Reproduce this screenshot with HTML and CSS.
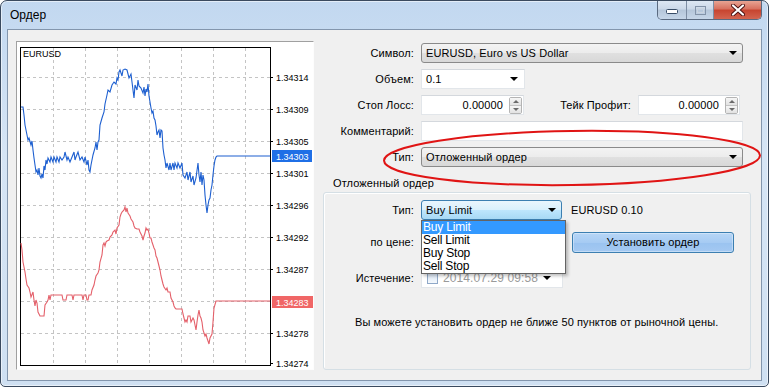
FILE: index.html
```html
<!DOCTYPE html>
<html lang="ru">
<head>
    <meta charset="UTF-8">
    <meta name="viewport" content="width=device-width, initial-scale=1.0">
    <title>Ордер</title>
    <link rel="stylesheet" href="styles.css">
</head>
<body>

<div class="window">
    <!-- Title bar -->
    <div class="titlebar">
        <span class="title">Ордер</span>
        <div class="caption-buttons">
            <span class="cap-btn cap-min">
                <svg width="12" height="6" viewBox="0 0 12 6"><rect x="0.5" y="0.5" width="11" height="4" rx="1" fill="#fff" stroke="#384c66"/></svg>
            </span>
            <span class="cap-btn cap-max">
                <svg width="11" height="9" viewBox="0 0 11 9"><rect x="0.5" y="0.5" width="10" height="8" fill="none" stroke="#8393a8"/><rect x="2.5" y="2.5" width="6" height="4" fill="none" stroke="#c9d3df"/></svg>
            </span>
            <span class="cap-btn cap-close">
                <svg width="14" height="12" viewBox="0 0 14 12"><path d="M2 1.5 L12 10.5 M12 1.5 L2 10.5" stroke="#4a1010" stroke-width="4" stroke-linecap="round"/><path d="M2 1.5 L12 10.5 M12 1.5 L2 10.5" stroke="#fff" stroke-width="2.2" stroke-linecap="round"/></svg>
            </span>
        </div>
    </div>

    <div class="client">
        <!-- Tick chart -->
        <div class="chart-panel">
            <svg class="chart" width="296" height="327" viewBox="17 42 296 327">
                <rect x="17" y="42" width="296" height="327" fill="#fff"/>
                <g stroke="#c4c4c4" stroke-dasharray="3 3" stroke-width="1">
                    <path d="M53.5 48V365M85.5 48V365M117.5 48V365M149.5 48V365M181.5 48V365M213.5 48V365M245.5 48V365"/>
                    <path d="M21 77.5H270M21 109.5H270M21 141.5H270M21 173.5H270M21 205.5H270M21 237.5H270M21 269.5H270M21 301.5H270M21 333.5H270"/>
                </g>
                <rect x="20.5" y="47.5" width="250" height="318" fill="none" stroke="#000"/>
                <g stroke="#000">
                    <path d="M270 77.5h3M270 109.5h3M270 141.5h3M270 173.5h3M270 205.5h3M270 237.5h3M270 269.5h3M270 333.5h3M270 363.5h3"/>
                </g>
                <polyline class="ask-line" points="21,107 23,107 24,115 25,125 27,135 28,140 29,138 31,145 32,141 33,150 34,158 35,165 36,172 37,170 38,175 39,168 40,176 41,178 42,174 43,178 44,166 45,170 46,160 47,164 48,158 50,162 51,157 53,162 54,157 56,162 57,157 59,162 60,157 62,160 64,157 65,152 67,160 68,157 70,162 72,157 74,152 75,160 76,157 78,152 80,160 82,157 84,162 85,157 87,165 88,160 89,170 90,172 91,165 93,155 95,148 96,142 97,150 98,142 99,140 100,125 102,118 104,112 105,104 107,95 108,90 110,92 112,85 114,82 116,84 117,78 118,80 119,72 120,70 122,76 123,70 125,69 127,70 129,78 131,74 132,82 133,90 134,98 135,85 137,90 138,80 139,86 141,88 143,93 144,87 145,96 146,89 147,92 148,84 149,96 150,102 151,108 152,113 153,111 154,118 155,120 156,126 157,135 158,132 159,130 160,138 161,130 162,131 163,148 164,155 165,160 166,168 167,163 169,170 170,163 171,170 173,163 174,170 175,163 177,168 178,163 180,168 182,163 183,175 185,178 187,172 188,180 190,172 191,182 193,176 194,185 196,178 198,163 199,175 200,182 201,172 202,185 203,175 204,180 205,195 206,205 207,213 208,205 209,200 210,198 211,190 212,185 213,175 214,166 215,160 216,157 217,156 270,156"/>
                <polyline class="bid-line" points="21,243 22,250 23,262 25,272 26,279 27,285 29,288 30,292 31,297 33,292 34,300 35,306 36,300 37,303 38,312 40,316 44,316 45,305 47,302 48,300 49,295 50,300 51,295 62,295 63,300 66,300 67,295 72,295 73,300 74,295 82,295 83,300 84,295 86,295 87,300 88,300 89,295 91,295 92,290 94,285 95,280 96,276 98,273 99,270 100,262 102,255 103,245 104,243 105,246 106,242 107,241 109,240 110,237 112,235 113,232 115,230 116,234 117,228 119,225 120,217 121,214 122,212 124,210 125,207 126,212 127,208 128,213 130,216 131,219 133,222 134,226 135,228 137,229 139,229 140,232 142,236 143,240 144,236 145,233 146,228 147,230 148,229 149,233 150,238 151,238 152,242 154,248 155,250 156,256 157,258 158,262 159,266 160,270 161,276 162,280 163,284 164,287 166,290 167,288 168,292 170,292 171,298 173,302 174,306 175,308 176,309 182,309 183,314 184,318 185,322 186,320 187,322 188,316 190,316 191,322 193,318 194,320 195,325 196,330 197,322 198,315 199,310 200,316 201,318 202,322 203,330 205,336 206,334 207,338 208,341 209,344 210,338 212,334 213,322 214,308 216,301 270,301"/>
                <g class="scale-text">
                    <text x="23" y="57">EURUSD</text>
                    <text x="276" y="81">1.34314</text>
                    <text x="276" y="113">1.34309</text>
                    <text x="276" y="145">1.34305</text>
                    <text x="276" y="177">1.34301</text>
                    <text x="276" y="209">1.34296</text>
                    <text x="276" y="241">1.34292</text>
                    <text x="276" y="273">1.34287</text>
                    <text x="276" y="337">1.34278</text>
                    <text x="276" y="367">1.34274</text>
                </g>
                <rect x="272" y="150" width="40" height="12" fill="#1f6fe6"/>
                <text class="tag-text" x="276" y="159.5">1.34303</text>
                <rect x="272" y="296" width="41" height="12" fill="#f06666"/>
                <text class="tag-text" x="276" y="305.5">1.34283</text>
            </svg>
        </div>

        <!-- Order form -->
        <div class="order-form">
            <div class="row">
                <span class="lbl">Символ:</span>
                <div class="combo combo-full"><span>EURUSD, Euro vs US Dollar</span><i class="arrow"></i></div>
            </div>
            <div class="row">
                <span class="lbl">Объем:</span>
                <div class="edit edit-volume"><span>0.1</span><i class="arrow"></i></div>
            </div>
            <div class="row">
                <span class="lbl">Стоп Лосс:</span>
                <div class="edit edit-spin">
                    <span class="num">0.00000</span>
                    <span class="spin"><b class="spin-up"></b><b class="spin-down"></b></span>
                </div>
                <span class="lbl lbl-tp">Тейк Профит:</span>
                <div class="edit edit-spin edit-tp">
                    <span class="num">0.00000</span>
                    <span class="spin"><b class="spin-up"></b><b class="spin-down"></b></span>
                </div>
            </div>
            <div class="row">
                <span class="lbl">Комментарий:</span>
                <div class="edit edit-full"></div>
            </div>
            <div class="row">
                <span class="lbl">Тип:</span>
                <div class="combo combo-full"><span>Отложенный ордер</span><i class="arrow"></i></div>
            </div>

            <!-- hand-drawn marker round the order type -->
            <svg class="marker" width="382" height="60" viewBox="0 0 382 60">
                <ellipse cx="190" cy="29" rx="188" ry="27" transform="rotate(-0.8 190 29)" fill="none" stroke="#e01414" stroke-width="2"/>
            </svg>

            <div class="group-caption">Отложенный ордер</div>
            <div class="group-box">
                <div class="row">
                    <span class="lbl">Тип:</span>
                    <div class="combo combo-hot"><span>Buy Limit</span><i class="arrow"></i></div>
                    <span class="symbol-info">EURUSD 0.10</span>

                    <ul class="dropdown">
                        <li class="selected">Buy Limit</li>
                        <li>Sell Limit</li>
                        <li>Buy Stop</li>
                        <li>Sell Stop</li>
                    </ul>
                </div>
                <div class="row row-price">
                    <span class="lbl">по цене:</span>
                    <div class="edit edit-price"></div>
                    <button class="btn-place">Установить ордер</button>
                </div>
                <div class="row row-expiry">
                    <span class="lbl">Истечение:</span>
                    <div class="edit edit-date">
                        <i class="check"></i>
                        <span class="date-text">2014.07.29 09:58</span>
                        <i class="arrow"></i>
                    </div>
                </div>
                <p class="note">Вы можете установить ордер не ближе 50 пунктов от рыночной цены.</p>
            </div>
        </div>
    </div>
</div>

</body>
</html>
```

FILE: styles.css
```css
body {
    margin: 0;
    font-family: 'Liberation Sans', Arial, sans-serif;
    font-size: 11px;
    letter-spacing: 0.1px;
    color: #000;
    background: #fff;
}
.window {
    width: 769px;
    height: 387px;
    box-sizing: border-box;
    border: 1px solid #3a4a5f;
    border-radius: 7px 7px 5px 5px;
    padding: 0 6px 5px;
    background: linear-gradient(to bottom, #c2d8f0 0%, #d6e5f5 40%, #cfe0f2 100%);
    box-shadow: inset 0 0 0 1px rgba(255, 255, 255, 0.55);
    display: flex;
    flex-direction: column;
}
.titlebar {
    height: 28px;
    display: flex;
    justify-content: space-between;
    align-items: flex-start;
}
.title {
    align-self: center;
    padding-left: 3px;
    font-size: 12px;
    letter-spacing: 0;
}
.caption-buttons {
    display: flex;
    height: 18px;
    border: 1px solid #5a6a80;
    border-top: none;
    border-radius: 0 0 5px 5px;
    overflow: hidden;
}
.cap-btn {
    display: flex;
    align-items: center;
    justify-content: center;
    background: linear-gradient(to bottom, #dde7f3 0%, #cbd8e8 45%, #b5c6da 50%, #c6d6e8 100%);
}
.cap-min {
    width: 28px;
    border-right: 1px solid #7d8da3;
}
.cap-min svg {
    margin-top: 4px;
}
.cap-max {
    width: 26px;
    border-right: 1px solid #7d8da3;
}
.cap-close {
    width: 47px;
    background: linear-gradient(to bottom, #e8a493 0%, #d7705e 45%, #c7442f 50%, #d36450 100%);
}
.client {
    flex: 1;
    display: flex;
    align-items: flex-start;
    gap: 9px;
    padding: 11px 0 0 8px;
    background: #f0f0f0;
    border: 1px solid #8396ad;
}

/* chart */
.chart-panel {
    width: 298px;
    height: 329px;
    box-sizing: border-box;
    border: 1px solid;
    border-color: #a0a0a0 #fdfdfd #fdfdfd #a0a0a0;
    flex: none;
}
.chart {
    display: block;
}
.ask-line {
    fill: none;
    stroke: #1d5fd0;
    stroke-width: 1.1;
}
.bid-line {
    fill: none;
    stroke: #e4606a;
    stroke-width: 1.1;
}
.scale-text text {
    font-family: 'Liberation Sans', Arial, sans-serif;
    font-size: 9px;
    letter-spacing: 0;
    fill: #000;
}
.tag-text {
    font-family: 'Liberation Sans', Arial, sans-serif;
    font-size: 9px;
    letter-spacing: 0;
    fill: #fff;
}

/* form */
.order-form {
    position: relative;
    width: 428px;
    padding-top: 2px;
}
.row {
    position: relative;
    display: flex;
    align-items: center;
    height: 20px;
    margin-bottom: 6px;
}
.lbl {
    width: 91px;
    margin-right: 7px;
    text-align: right;
    flex: none;
}
.combo {
    height: 20px;
    box-sizing: border-box;
    display: flex;
    align-items: center;
    padding-left: 4px;
    border: 1px solid #8a8a8a;
    border-radius: 3px;
    background: linear-gradient(to bottom, #f3f3f3 0%, #ececec 50%, #e0e0e0 51%, #d8d8d8 100%);
}
.combo-full {
    width: 322px;
}
.combo-hot {
    width: 141px;
    border-color: #3c7fb1;
    background: linear-gradient(to bottom, #eaf6fd 0%, #d9f0fc 50%, #bee6fd 51%, #a7d9f5 100%);
}
.arrow {
    margin-left: auto;
    margin-right: 5px;
    width: 0;
    height: 0;
    border-left: 4px solid transparent;
    border-right: 4px solid transparent;
    border-top: 4px solid #000;
}
.edit {
    height: 20px;
    box-sizing: border-box;
    display: flex;
    align-items: center;
    background: #fff;
    border: 1px solid #e2e6ea;
    border-top-color: #d4d8dd;
}
.edit-volume {
    width: 104px;
    padding-left: 4px;
}
.edit-volume .arrow {
    margin-right: 6px;
}
.edit-spin {
    width: 103px;
    padding-right: 1px;
}
.edit-tp {
    width: 102px;
}
.num {
    flex: 1;
    text-align: right;
    padding-right: 6px;
}
.spin {
    width: 13px;
    height: 17px;
    display: flex;
    flex-direction: column;
    border: 1px solid #b4b4b4;
    border-radius: 2px;
    box-sizing: border-box;
}
.spin b {
    flex: 1;
    display: flex;
    align-items: center;
    justify-content: center;
    background: linear-gradient(to bottom, #f6f6f6, #e2e2e2);
}
.spin-up {
    border-bottom: 1px solid #c4c4c4;
}
.spin-up::after {
    content: '';
    border-left: 3px solid transparent;
    border-right: 3px solid transparent;
    border-bottom: 3px solid #6a6a6a;
}
.spin-down::after {
    content: '';
    border-left: 3px solid transparent;
    border-right: 3px solid transparent;
    border-top: 3px solid #6a6a6a;
}
.lbl-tp {
    width: 107px;
}
.edit-full {
    width: 322px;
}
.marker {
    position: absolute;
    left: 59px;
    top: 88px;
    overflow: visible;
    pointer-events: none;
}
.group-caption {
    margin-top: 9px;
    padding-left: 10px;
    line-height: 14px;
    height: 14px;
}
.group-box {
    margin-top: 2px;
    height: 178px;
    box-sizing: border-box;
    border: 1px solid #d5dfe5;
    border-radius: 3px;
    box-shadow: inset 1px 1px 0 #fff;
    padding-top: 7px;
}
.group-box .lbl {
    width: 90px;
}
.symbol-info {
    margin-left: 9px;
}
.row-price {
    margin-top: 12px;
    margin-bottom: 0;
}
.edit-price {
    width: 141px;
}
.btn-place {
    margin-left: 10px;
    width: 162px;
    height: 21px;
    font-family: inherit;
    font-size: 11px;
    letter-spacing: 0.1px;
    border: 1px solid #3c7fb1;
    border-radius: 3px;
    background: linear-gradient(to bottom, #b7d6f6 0%, #a6cbf3 50%, #9ac3f0 51%, #a4c9f2 100%);
    box-shadow: inset 0 0 0 1px rgba(255, 255, 255, 0.35);
}
.row-expiry {
    margin-top: 16px;
}
.edit-date {
    width: 142px;
    padding-left: 5px;
}
.check {
    width: 11px;
    height: 11px;
    box-sizing: border-box;
    border: 1px solid #8fa8c8;
    background: linear-gradient(to bottom, #dbe7f5, #f4f8fc);
    margin-right: 5px;
}
.date-text {
    color: #9a9a9a;
    font-size: 12px;
}
.edit-date .arrow {
    margin-right: 11px;
}
.dropdown {
    position: absolute;
    left: 97px;
    top: 20px;
    width: 143px;
    margin: 0;
    padding: 0;
    list-style: none;
    background: #fff;
    border: 1px solid #646464;
    box-shadow: 2px 2px 3px rgba(0, 0, 0, 0.25);
    z-index: 2;
}
.dropdown li {
    height: 13px;
    line-height: 13px;
    padding-left: 1px;
    font-size: 12px;
    letter-spacing: -0.2px;
}
.dropdown .selected {
    background: #3399ff;
    color: #fff;
}
.note {
    margin: 27px 0 0 31px;
    line-height: 14px;
}
```
